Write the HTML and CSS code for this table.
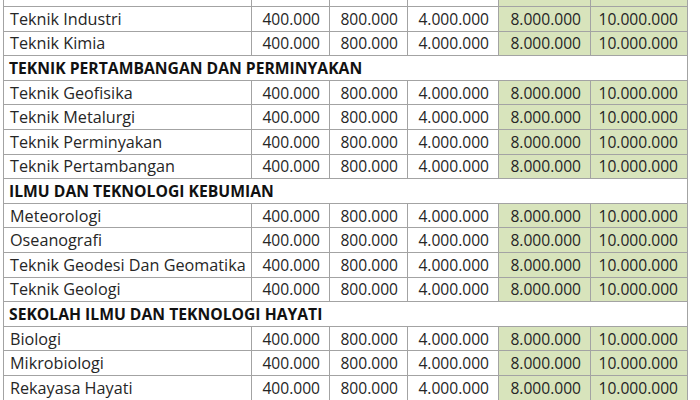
FILE: index.html
```html
<!DOCTYPE html>
<html>
<head>
<meta charset="utf-8">
<link rel="stylesheet" href="styles.css">
</head>
<body>
<div class="viewport">
<table class="fees">
<colgroup>
<col class="c-name"><col class="c-a"><col class="c-b"><col class="c-c"><col class="c-d"><col class="c-e">
</colgroup>
<tbody>
<tr class="cut"><td class="name"></td><td class="num"></td><td class="num"></td><td class="num"></td><td class="num hl"></td><td class="num hl"></td></tr>
<tr><td class="name">Teknik Industri</td><td class="num">400.000</td><td class="num">800.000</td><td class="num">4.000.000</td><td class="num hl">8.000.000</td><td class="num hl">10.000.000</td></tr>
<tr><td class="name">Teknik Kimia</td><td class="num">400.000</td><td class="num">800.000</td><td class="num">4.000.000</td><td class="num hl">8.000.000</td><td class="num hl">10.000.000</td></tr>
<tr class="section"><td colspan="6">TEKNIK PERTAMBANGAN DAN PERMINYAKAN</td></tr>
<tr><td class="name">Teknik Geofisika</td><td class="num">400.000</td><td class="num">800.000</td><td class="num">4.000.000</td><td class="num hl">8.000.000</td><td class="num hl">10.000.000</td></tr>
<tr><td class="name">Teknik Metalurgi</td><td class="num">400.000</td><td class="num">800.000</td><td class="num">4.000.000</td><td class="num hl">8.000.000</td><td class="num hl">10.000.000</td></tr>
<tr><td class="name">Teknik Perminyakan</td><td class="num">400.000</td><td class="num">800.000</td><td class="num">4.000.000</td><td class="num hl">8.000.000</td><td class="num hl">10.000.000</td></tr>
<tr><td class="name">Teknik Pertambangan</td><td class="num">400.000</td><td class="num">800.000</td><td class="num">4.000.000</td><td class="num hl">8.000.000</td><td class="num hl">10.000.000</td></tr>
<tr class="section"><td colspan="6">ILMU DAN TEKNOLOGI KEBUMIAN</td></tr>
<tr><td class="name">Meteorologi</td><td class="num">400.000</td><td class="num">800.000</td><td class="num">4.000.000</td><td class="num hl">8.000.000</td><td class="num hl">10.000.000</td></tr>
<tr><td class="name">Oseanografi</td><td class="num">400.000</td><td class="num">800.000</td><td class="num">4.000.000</td><td class="num hl">8.000.000</td><td class="num hl">10.000.000</td></tr>
<tr><td class="name">Teknik Geodesi Dan Geomatika</td><td class="num">400.000</td><td class="num">800.000</td><td class="num">4.000.000</td><td class="num hl">8.000.000</td><td class="num hl">10.000.000</td></tr>
<tr><td class="name">Teknik Geologi</td><td class="num">400.000</td><td class="num">800.000</td><td class="num">4.000.000</td><td class="num hl">8.000.000</td><td class="num hl">10.000.000</td></tr>
<tr class="section"><td colspan="6">SEKOLAH ILMU DAN TEKNOLOGI HAYATI</td></tr>
<tr><td class="name">Biologi</td><td class="num">400.000</td><td class="num">800.000</td><td class="num">4.000.000</td><td class="num hl">8.000.000</td><td class="num hl">10.000.000</td></tr>
<tr><td class="name">Mikrobiologi</td><td class="num">400.000</td><td class="num">800.000</td><td class="num">4.000.000</td><td class="num hl">8.000.000</td><td class="num hl">10.000.000</td></tr>
<tr><td class="name">Rekayasa Hayati</td><td class="num">400.000</td><td class="num">800.000</td><td class="num">4.000.000</td><td class="num hl">8.000.000</td><td class="num hl">10.000.000</td></tr>
</tbody>
</table>
</div>
</body>
</html>
```
FILE: styles.css
```css
html, body {
  margin: 0;
  padding: 0;
  background: #ffffff;
}
.viewport {
  height: 400px;
  overflow: hidden;
  padding-left: 3px;
}
.fees {
  margin-top: -18.6px;
  border-collapse: collapse;
  table-layout: fixed;
  width: 685px;
  font-family: "Open Sans", "Liberation Sans", sans-serif;
  font-size: 15.6px;
  color: #262626;
}
.c-name { width: 248px; }
.c-a { width: 78px; }
.c-b { width: 78px; }
.c-c { width: 91px; }
.c-d { width: 92px; }
.c-e { width: 97px; }
.fees td {
  border: 1px solid #a3a3a3;
  height: 24.6px;
  padding: 0;
  line-height: 22px;
  white-space: nowrap;
  box-sizing: border-box;
}
.fees td.name {
  padding-left: 6px;
  text-align: left;
  font-size: 16.2px;
}
.fees td.num {
  text-align: right;
  padding-right: 9px;
}
.fees td.hl {
  background: #d8e4bc;
}
.fees tr.section td {
  font-weight: 700;
  font-size: 15.7px;
  color: #111111;
  padding-left: 5px;
  background: #ffffff;
}
```
